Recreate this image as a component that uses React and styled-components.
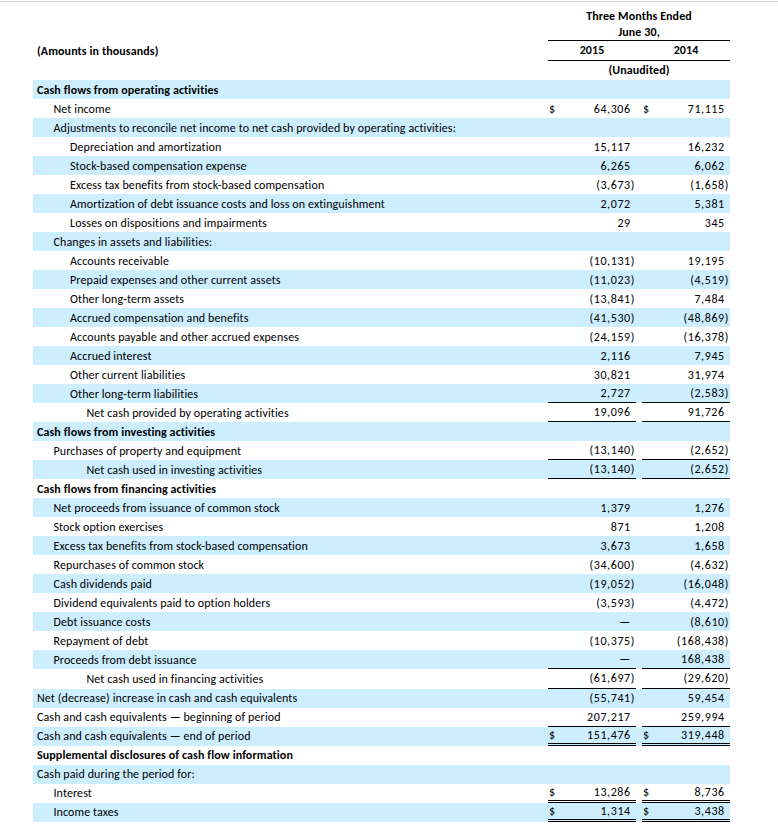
import React from "react";
import styled, { createGlobalStyle } from "styled-components";

const Global = createGlobalStyle`
  html, body { margin: 0; padding: 0; background: #fff; }
  body {
    font-family: Carlito, Calibri, "Liberation Sans Narrow", "Liberation Sans", sans-serif;
    font-size: 12px;
    letter-spacing: 0.1px;
    font-variant-ligatures: none;
    font-feature-settings: "liga" 0, "clig" 0;
    color: #000;
  }
`;

const Page = styled.div`
  width: 778px;
  margin-top: 1px;
  border-top: 1px solid #d6d6d6;
  padding-left: 33px;
  box-sizing: border-box;
`;

const Grid = styled.div`
  display: grid;
  grid-template-columns: 515px 88px 6px 88px;
  width: 697px;
`;

const HeadTitle = styled(Grid)`
  height: 39px;
`;

const TitleCell = styled.div`
  grid-column: 2 / 5;
  box-sizing: border-box;
  padding-top: 6px;
  border-bottom: 1px solid #000;
  text-align: center;
  font-weight: bold;
  line-height: 16px;
`;

const HeadRow = styled(Grid)`
  height: 19.5px;
  align-items: stretch;
  font-weight: bold;
`;

const HeadLabel = styled.div`
  padding-left: 4px;
  display: flex;
  align-items: center;
`;

const YearCell = styled.div`
  grid-column: ${(p) => p.$col};
  display: flex;
  align-items: center;
  justify-content: center;
  box-sizing: border-box;
  border-bottom: ${(p) => (p.$line ? "1px solid #000" : "none")};
`;

const Spacer = styled.div`
  box-sizing: border-box;
  border-bottom: ${(p) => (p.$line ? "1px solid #000" : "none")};
`;

const SpanCell = styled.div`
  grid-column: 2 / 5;
  display: flex;
  align-items: center;
  justify-content: center;
`;

const Row = styled(Grid)`
  height: 19.03px;
  background: ${(p) => (p.$shade ? "#cceeff" : "#fff")};
`;

const Label = styled.div`
  display: flex;
  align-items: center;
  padding-left: ${(p) => 4 + p.$level * 16.5}px;
  font-weight: ${(p) => (p.$bold ? "bold" : "normal")};
  white-space: nowrap;
`;

const Amount = styled.div`
  grid-column: ${(p) => p.$col};
  display: flex;
  align-items: center;
  justify-content: space-between;
  box-sizing: border-box;
  padding: 0 1px 0 1px;
  border-bottom: ${(p) =>
    p.$line === "double" ? "3px double #000" : p.$line === "single" ? "1px solid #000" : "none"};
  white-space: nowrap;
`;

const Dollar = styled.span``;

const Num = styled.span`
  margin-left: auto;
  letter-spacing: 0.6px;
`;

const Hidden = styled.span`
  visibility: hidden;
`;

const rows = [
  { label: "Cash flows from operating activities", level: 0, bold: true },
  { label: "Net income", level: 1, a: "64,306", b: "71,115", dollar: true },
  { label: "Adjustments to reconcile net income to net cash provided by operating activities:", level: 1 },
  { label: "Depreciation and amortization", level: 2, a: "15,117", b: "16,232" },
  { label: "Stock-based compensation expense", level: 2, a: "6,265", b: "6,062" },
  { label: "Excess tax benefits from stock-based compensation", level: 2, a: "(3,673)", b: "(1,658)" },
  { label: "Amortization of debt issuance costs and loss on extinguishment", level: 2, a: "2,072", b: "5,381" },
  { label: "Losses on dispositions and impairments", level: 2, a: "29", b: "345" },
  { label: "Changes in assets and liabilities:", level: 1 },
  { label: "Accounts receivable", level: 2, a: "(10,131)", b: "19,195" },
  { label: "Prepaid expenses and other current assets", level: 2, a: "(11,023)", b: "(4,519)" },
  { label: "Other long-term assets", level: 2, a: "(13,841)", b: "7,484" },
  { label: "Accrued compensation and benefits", level: 2, a: "(41,530)", b: "(48,869)" },
  { label: "Accounts payable and other accrued expenses", level: 2, a: "(24,159)", b: "(16,378)" },
  { label: "Accrued interest", level: 2, a: "2,116", b: "7,945" },
  { label: "Other current liabilities", level: 2, a: "30,821", b: "31,974" },
  { label: "Other long-term liabilities", level: 2, a: "2,727", b: "(2,583)", line: "single" },
  { label: "Net cash provided by operating activities", level: 3, a: "19,096", b: "91,726", line: "single" },
  { label: "Cash flows from investing activities", level: 0, bold: true },
  { label: "Purchases of property and equipment", level: 1, a: "(13,140)", b: "(2,652)", line: "single" },
  { label: "Net cash used in investing activities", level: 3, a: "(13,140)", b: "(2,652)", line: "single" },
  { label: "Cash flows from financing activities", level: 0, bold: true },
  { label: "Net proceeds from issuance of common stock", level: 1, a: "1,379", b: "1,276" },
  { label: "Stock option exercises", level: 1, a: "871", b: "1,208" },
  { label: "Excess tax benefits from stock-based compensation", level: 1, a: "3,673", b: "1,658" },
  { label: "Repurchases of common stock", level: 1, a: "(34,600)", b: "(4,632)" },
  { label: "Cash dividends paid", level: 1, a: "(19,052)", b: "(16,048)" },
  { label: "Dividend equivalents paid to option holders", level: 1, a: "(3,593)", b: "(4,472)" },
  { label: "Debt issuance costs", level: 1, a: "—", b: "(8,610)" },
  { label: "Repayment of debt", level: 1, a: "(10,375)", b: "(168,438)" },
  { label: "Proceeds from debt issuance", level: 1, a: "—", b: "168,438", line: "single" },
  { label: "Net cash used in financing activities", level: 3, a: "(61,697)", b: "(29,620)", line: "single" },
  { label: "Net (decrease) increase in cash and cash equivalents", level: 0, a: "(55,741)", b: "59,454" },
  { label: "Cash and cash equivalents — beginning of period", level: 0, a: "207,217", b: "259,994", line: "single" },
  { label: "Cash and cash equivalents — end of period", level: 0, a: "151,476", b: "319,448", dollar: true, line: "double" },
  { label: "Supplemental disclosures of cash flow information", level: 0, bold: true },
  { label: "Cash paid during the period for:", level: 0 },
  { label: "Interest", level: 1, a: "13,286", b: "8,736", dollar: true, line: "double" },
  { label: "Income taxes", level: 1, a: "1,314", b: "3,438", dollar: true, line: "double" },
];

function Value({ value, col, dollar, line }) {
  const neg = value && value.endsWith(")");
  return (
    <Amount $col={col} $line={line}>
      {dollar ? <Dollar>$</Dollar> : null}
      {value ? (
        <Num>
          {value}
          {neg ? null : <Hidden>)</Hidden>}
        </Num>
      ) : null}
    </Amount>
  );
}

export default function App() {
  return (
    <>
      <Global />
      <Page>
        <HeadTitle>
          <div />
          <TitleCell>
            Three Months Ended
            <br />
            June 30,
          </TitleCell>
        </HeadTitle>
        <HeadRow>
          <HeadLabel>(Amounts in thousands)</HeadLabel>
          <YearCell $col="2" $line>2015</YearCell>
          <Spacer $line />
          <YearCell $col="4" $line>2014</YearCell>
        </HeadRow>
        <HeadRow>
          <div />
          <SpanCell>(Unaudited)</SpanCell>
        </HeadRow>
        {rows.map((r, i) => (
          <Row key={i} $shade={i % 2 === 0}>
            <Label $level={r.level} $bold={r.bold}>
              {r.label}
            </Label>
            {r.a !== undefined ? (
              <>
                <Value value={r.a} col="2" dollar={r.dollar} line={r.line} />
                <Value value={r.b} col="4" dollar={r.dollar} line={r.line} />
              </>
            ) : null}
          </Row>
        ))}
      </Page>
    </>
  );
}
